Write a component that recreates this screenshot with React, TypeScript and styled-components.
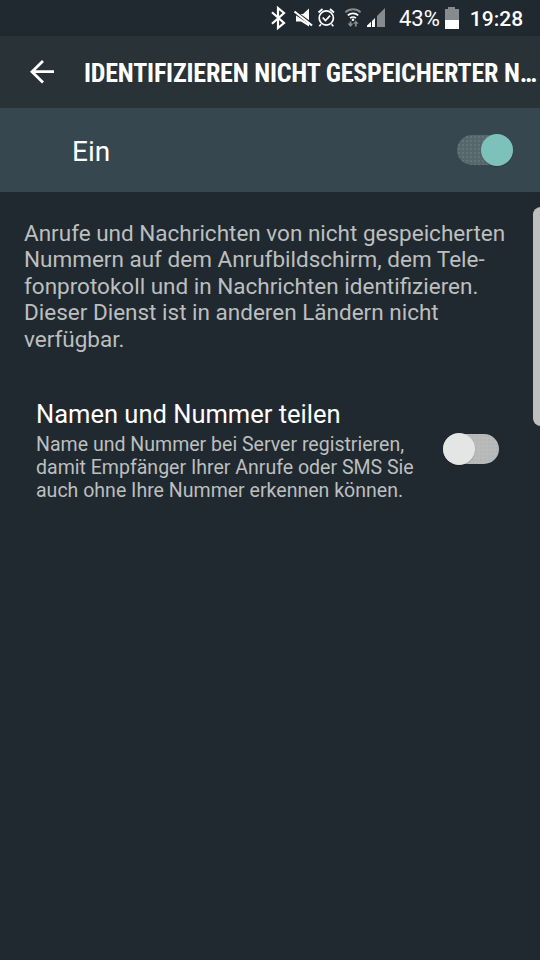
import React from 'react';
import styled, { createGlobalStyle } from 'styled-components';

const GlobalStyle = createGlobalStyle`
  *, *::before, *::after { box-sizing: border-box; }
  body {
    margin: 0;
    background: #212930;
    font-family: Roboto, "Liberation Sans", sans-serif;
    overflow: hidden;
  }
`;

const Screen = styled.div`
  position: relative;
  display: flex;
  flex-direction: column;
  width: 540px;
  height: 960px;
  background: #212930;
  color: #fff;
  overflow: hidden;
`;

const StatusBar = styled.header`
  display: flex;
  align-items: center;
  height: 36px;
  padding-left: 268px;
  flex: none;
`;

const StatusIcons = styled.svg`
  display: block;
  width: 122px;
  height: 36px;
`;

const StatusText = styled.span<{ $medium?: boolean; $gap: number }>`
  margin-left: ${p => p.$gap}px;
  padding-top: 2px;
  font-size: ${p => (p.$medium ? 21 : 22)}px;
  line-height: 36px;
  font-weight: ${p => (p.$medium ? 500 : 400)};
  white-space: nowrap;
`;

const BatteryIcon = styled.svg`
  display: block;
  width: 14px;
  height: 36px;
  margin-left: 5px;
`;

const TitleBar = styled.div`
  display: flex;
  align-items: center;
  height: 72px;
  padding-left: 28px;
  background: #283237;
  flex: none;
`;

const BackButton = styled.button`
  width: 28px;
  height: 28px;
  margin: 0 28px 0 0;
  padding: 0;
  border: 0;
  background: none;
  color: #fff;

  svg { display: block; }
`;

const Title = styled.h1`
  margin: 2px 0 0;
  font-family: "Roboto Condensed", Roboto, sans-serif;
  font-stretch: 75%;
  font-size: 26px;
  line-height: 32px;
  font-weight: 700;
  letter-spacing: -0.2px;
  white-space: nowrap;
`;

const MasterRow = styled.div`
  display: flex;
  align-items: center;
  justify-content: space-between;
  height: 84px;
  padding: 0 27px 0 72px;
  background: #37474f;
  font-size: 28px;
  flex: none;
`;

const MasterLabel = styled.span`
  padding-top: 2px;
`;

const Track = styled.span<{ $on?: boolean }>`
  display: flex;
  align-items: center;
  justify-content: ${p => (p.$on ? 'flex-end' : 'flex-start')};
  width: 56px;
  height: 30px;
  border-radius: 15px;
  background-color: ${p => (p.$on ? '#58666b' : '#b9bbbb')};
  background-image: radial-gradient(circle, ${p => (p.$on ? '#61817f' : '#b0b2b2')} 0.6px, transparent 0.9px);
  background-size: 4px 4px;
  flex: none;
`;

const Thumb = styled.span<{ $on?: boolean }>`
  width: 32px;
  height: 32px;
  border-radius: 50%;
  background: ${p => (p.$on ? '#7dc2ba' : '#e4e6e6')};
  box-shadow: 0 1px 1px rgba(0, 0, 0, 0.2);
  flex: none;
`;

const Description = styled.p`
  margin: 27.5px 0 0 24px;
  font-size: 22.5px;
  line-height: 26.5px;
  color: #bcbfbf;
  white-space: nowrap;
`;

const Setting = styled.section`
  display: flex;
  align-items: center;
  justify-content: space-between;
  margin: 44.5px 41px 0 36px;
`;

const SettingTitle = styled.h2`
  margin: 0 0 2px;
  font-size: 25.5px;
  line-height: 34px;
  font-weight: 400;
`;

const SettingSummary = styled.p`
  margin: 0;
  font-size: 19.55px;
  line-height: 23px;
  color: #bcbfbf;
  white-space: nowrap;
`;

const EdgeHandle = styled.div`
  position: absolute;
  top: 207px;
  right: -8px;
  width: 15px;
  height: 219px;
  border-radius: 8px;
  background: #bfbfbf;
`;

function Switch({ on }: { on?: boolean }) {
  return (
    <Track role="switch" aria-checked={!!on} $on={on}>
      <Thumb $on={on} />
    </Track>
  );
}

function Indicators() {
  return (
    <StatusIcons viewBox="268 0 122 36" fill="none" aria-hidden="true">
      <path d="M272 12.3 284 23 278 28V8l6 5-12 10.7" stroke="#fff" strokeWidth="2.2" />
      <path d="M300.5 14h2.5l6-5.5v11.8zM296 15.5l13 8.5v2.5l-8-5h-5z" fill="#fff" />
      <path d="m294.5 11.5 17.5 14" stroke="#fff" strokeWidth="2.2" />
      <circle cx="326.3" cy="18" r="7.1" stroke="#fff" strokeWidth="1.7" />
      <path d="m322.7 17.5 2.8 3 4.6-4.8M318.5 12.5l4-3.5M334 12.5l-4-3.5M321 24.2l-1.7 2M331.6 24.2l1.7 2" stroke="#fff" strokeWidth="1.7" />
      <path d="M345.4 12.4a11 11 0 0 1 15.2 0" stroke="#858b8e" strokeWidth="2" />
      <path d="M347.8 15.4a7.5 7.5 0 0 1 10.4 0M350.1 18.2a4.2 4.2 0 0 1 5.8 0" stroke="#fff" strokeWidth="1.8" />
      <circle cx="353" cy="19.8" r="1.3" fill="#fff" />
      <path d="M350.5 21.5v4M355.8 26.5v-4" stroke="#858b8e" strokeWidth="1.8" />
      <path d="M347.6 23.5h5.8l-2.9 3.4zM353 23.8h5.6l-2.8-3.3z" fill="#858b8e" />
      <path d="M367 27v-1.5l4-3.7V27zM372 27v-6l3-3v9z" fill="#fff" />
      <path d="M377 27V16l8-8v19z" fill="#858b8e" />
    </StatusIcons>
  );
}

export default function App() {
  return (
    <>
      <GlobalStyle />
      <Screen>
        <StatusBar>
          <Indicators />
          <StatusText $gap={9}>43%</StatusText>
          <BatteryIcon viewBox="0 0 14 36" aria-hidden="true">
            <path d="M0 9h3V7h7v2h4v11H0z" fill="#858b8e" />
            <path d="M0 20h14v9H0z" fill="#fff" />
          </BatteryIcon>
          <StatusText $medium $gap={11}>19:28</StatusText>
        </StatusBar>
        <TitleBar>
          <BackButton aria-label="Zurück">
            <svg width="28" height="28" viewBox="0 0 28 28" fill="none" stroke="#fff" strokeWidth="2.8">
              <path d="M26 13.7H4M15 3 4 13.7 15 24.5" />
            </svg>
          </BackButton>
          <Title>IDENTIFIZIEREN NICHT GESPEICHERTER N…</Title>
        </TitleBar>
        <MasterRow>
          <MasterLabel>Ein</MasterLabel>
          <Switch on />
        </MasterRow>
        <Description>
          Anrufe und Nachrichten von nicht gespeicherten<br />
          Nummern auf dem Anrufbildschirm, dem Tele-<br />
          fonprotokoll und in Nachrichten identifizieren.<br />
          Dieser Dienst ist in anderen Ländern nicht<br />
          verfügbar.
        </Description>
        <Setting>
          <div>
            <SettingTitle>Namen und Nummer teilen</SettingTitle>
            <SettingSummary>
              Name und Nummer bei Server registrieren,<br />
              damit Empfänger Ihrer Anrufe oder SMS Sie<br />
              auch ohne Ihre Nummer erkennen können.
            </SettingSummary>
          </div>
          <Switch />
        </Setting>
        <EdgeHandle />
      </Screen>
    </>
  );
}
